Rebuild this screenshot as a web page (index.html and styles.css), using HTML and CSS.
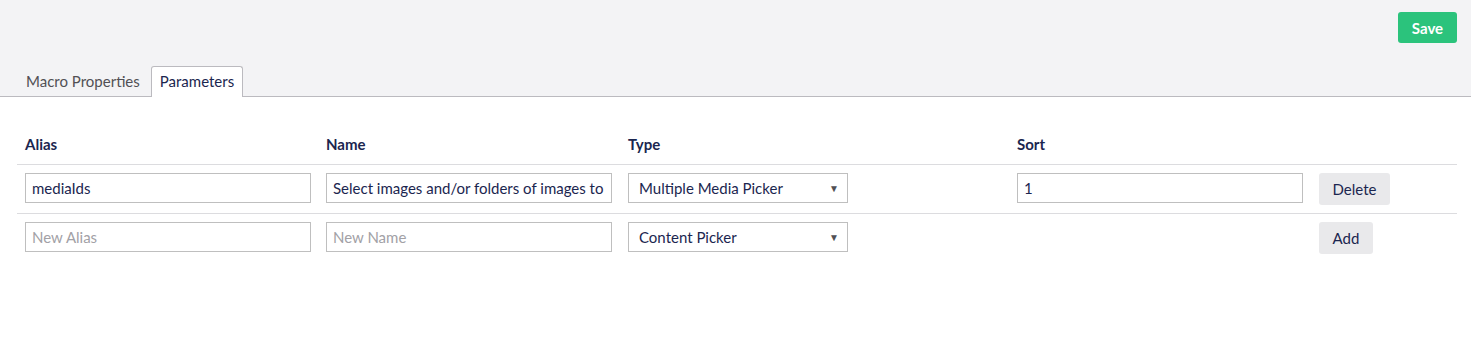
FILE: index.html
```html
<!DOCTYPE html>
<html>
<head>
<meta charset="utf-8">
<link rel="stylesheet" href="styles.css">
</head>
<body>
<header class="top">
  <div class="top-actions">
    <button class="btn-save">Save</button>
  </div>
  <nav class="tabs">
    <a class="tab">Macro Properties</a>
    <a class="tab active">Parameters</a>
  </nav>
</header>
<main class="content">
  <div class="grid">
    <div class="row head">
      <div class="cell">Alias</div>
      <div class="cell">Name</div>
      <div class="cell">Type</div>
      <div class="cell">Sort</div>
      <div class="cell"></div>
    </div>
    <div class="row">
      <div class="cell"><input class="field" type="text" value="mediaIds"></div>
      <div class="cell"><input class="field" type="text" value="Select images and/or folders of images to display"></div>
      <div class="cell"><div class="select">Multiple Media Picker<span class="arrow">▼</span></div></div>
      <div class="cell"><input class="field" type="text" value="1"></div>
      <div class="cell"><button class="btn">Delete</button></div>
    </div>
    <div class="row">
      <div class="cell"><input class="field" type="text" placeholder="New Alias"></div>
      <div class="cell"><input class="field" type="text" placeholder="New Name"></div>
      <div class="cell"><div class="select">Content Picker<span class="arrow">▼</span></div></div>
      <div class="cell"></div>
      <div class="cell"><button class="btn">Add</button></div>
    </div>
  </div>
</main>
</body>
</html>
```

FILE: styles.css
```css
* { box-sizing: border-box; }
html, body { margin: 0; padding: 0; }
body {
  font-family: Lato, "Open Sans", sans-serif;
  font-size: 15px;
  color: #1b264f;
  background: #fff;
  width: 1471px;
  height: 346px;
  overflow: hidden;
}
.top {
  background: #f3f3f5;
  border-bottom: 1px solid #bbbabf;
  height: 97px;
  display: flex;
  flex-direction: column;
  justify-content: space-between;
}
.top-actions {
  display: flex;
  justify-content: flex-end;
  padding: 12px 14px 0 0;
}
.btn-save {
  font-family: Lato, sans-serif;
  font-weight: 700;
  font-size: 15px;
  color: #fff;
  background: #2bc37c;
  border: 0;
  border-radius: 3px;
  width: 59px;
  height: 31px;
  padding: 0;
}
.tabs {
  display: flex;
  padding-left: 15px;
  margin-bottom: -1px;
}
.tab {
  font-size: 15px;
  color: #515054;
  padding: 0 10px;
  height: 30px;
  line-height: 28px;
  border: 1px solid transparent;
  border-bottom: 0;
  border-radius: 3px 3px 0 0;
}
.tab.active {
  background: #fff;
  color: #1b264f;
  border-color: #bbbabf;
  height: 31px;
  padding: 0 8px;
}
.content {
  padding: 28px 14px 0 17px;
}
.row {
  display: grid;
  grid-template-columns: 301px 302px 389px 302px 1fr;
  border-top: 1px solid #dcdcdf;
}
.row.head {
  border-top: 0;
  font-weight: 700;
  line-height: 20px;
}
.row.head .cell {
  padding: 9px 8px 10px 8px;
  min-height: 0;
}
.cell {
  padding: 8px;
  min-height: 48px;
}
.field {
  width: 286px;
  height: 30px;
  border: 1px solid #bfbfbf;
  border-radius: 0;
  padding: 0 6px;
  font-family: Lato, sans-serif;
  font-size: 15px;
  color: #1b264f;
  background: #fff;
  outline: none;
}
.field::placeholder { color: #a2a1a6; }
.select {
  width: 220px;
  height: 30px;
  border: 1px solid #bfbfbf;
  padding: 0 8px 0 10px;
  display: flex;
  align-items: center;
  justify-content: space-between;
  line-height: 28px;
}
.arrow {
  font-size: 10px;
  color: #515054;
}
.btn {
  font-family: Lato, sans-serif;
  font-size: 15px;
  color: #1b264f;
  background: #e9e9eb;
  border: 0;
  border-radius: 3px;
  height: 32px;
  padding: 0 13.5px;
}
```
